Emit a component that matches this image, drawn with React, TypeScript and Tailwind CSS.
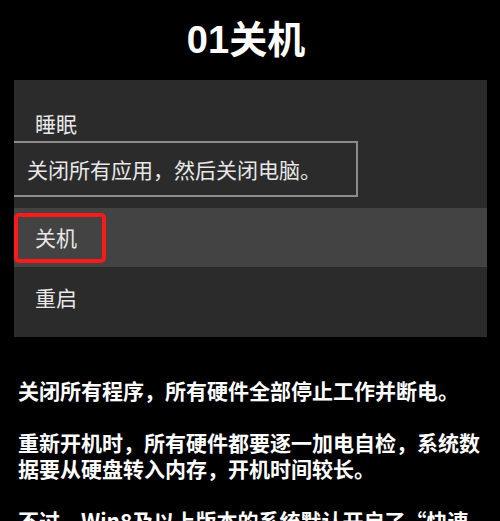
import React from 'react'

const cjk = { fontFamily: '"Noto Sans CJK SC", "Noto Sans", sans-serif' }

function PowerMenu() {
    return (
        <div className="mx-[14px] h-[257px] w-[473px] bg-[#2b2b2b] text-[21px] text-[#e8e8e8]">
            {/* Sleep row */}
            <div className="flex h-[61px] items-center pl-[21px] pt-[25px] leading-none">睡眠</div>

            <div className="flex h-[56px] w-[344px] items-center border-2 border-l-0 border-[#8c8c8c] pl-[13px] leading-none">
                关闭所有应用，然后关闭电脑。
            </div>

            {/* Shutdown row (hovered) */}
            <div className="relative mt-[11px] flex h-[59px] items-center bg-[#434343] pl-[21px] leading-none">
                关机
                <div className="absolute left-0 top-[5px] h-[50px] w-[92px] rounded-[5px] border-4 border-[#ff1a1a]" />
            </div>

            {/* Restart row */}
            <div className="flex h-[60px] items-center pl-[21px] leading-none">重启</div>
        </div>
    )
}

export default function App() {
    return (
        <div className="h-[521px] w-[500px] overflow-hidden bg-black text-white" style={cjk}>
            <h1
                className="flex h-[80px] items-center justify-center pr-2 text-[38px] font-bold leading-none"
                style={{ fontFamily: '"Liberation Sans", "Noto Sans CJK SC", sans-serif' }}
            >
                01关机
            </h1>

            <PowerMenu />

            <div className="mt-[40px] px-[18px] text-[21px] font-bold leading-[26px]">
                <p>关闭所有程序，所有硬件全部停止工作并断电。</p>
                <p className="mt-[26px]">重新开机时，所有硬件都要逐一加电自检，系统数据要从硬盘转入内存，开机时间较长。</p>
                <p className="mt-[26px]">不过，Win8及以上版本的系统默认开启了“快速启动”</p>
            </div>
        </div>
    )
}
